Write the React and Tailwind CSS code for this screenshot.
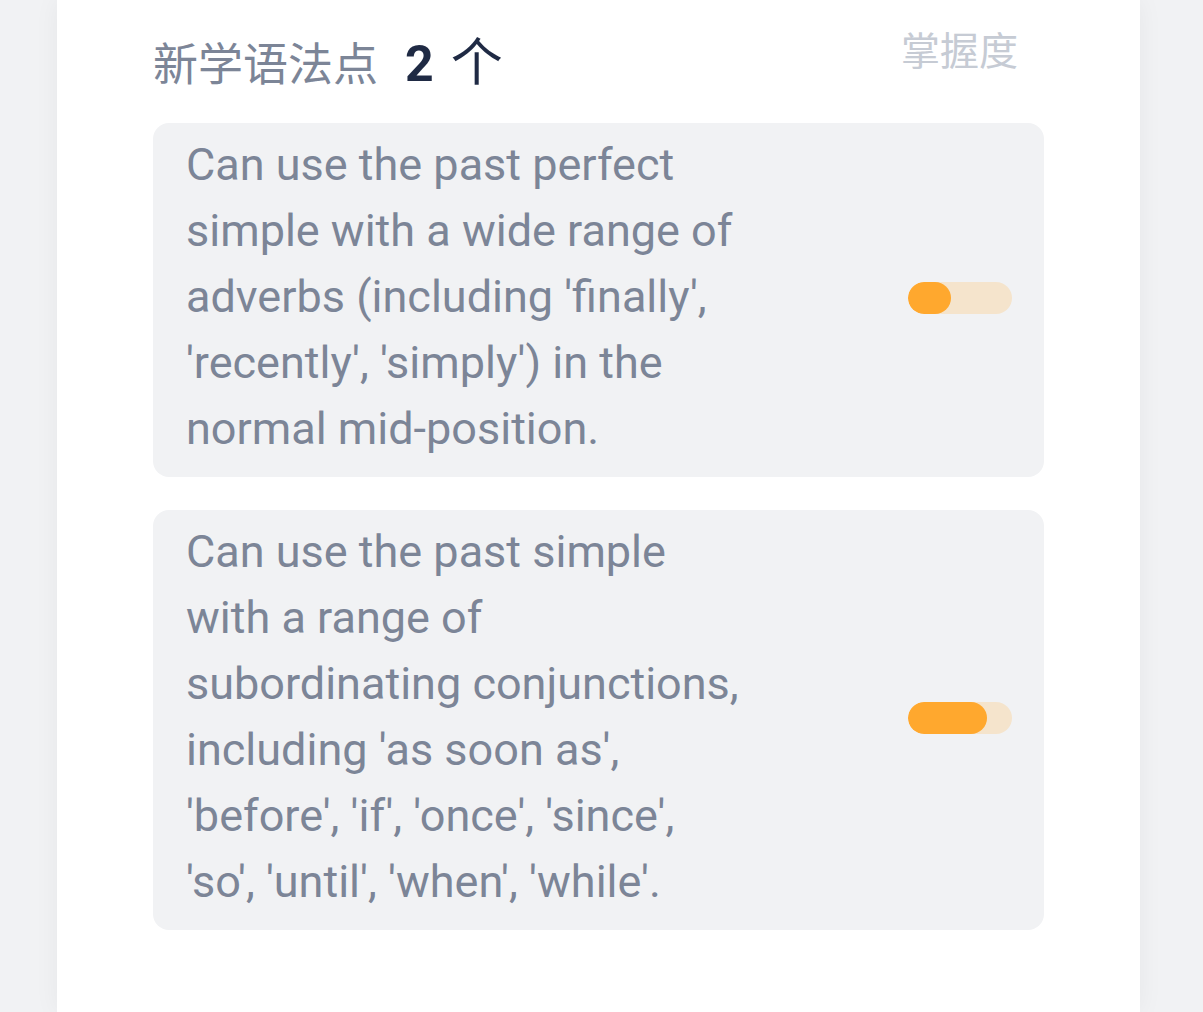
const points = [
  {
    text: "Can use the past perfect simple with a wide range of adverbs (including 'finally', 'recently', 'simply') in the normal mid-position.",
    level: 41,
  },
  {
    text: "Can use the past simple with a range of subordinating conjunctions, including 'as soon as', 'before', 'if', 'once', 'since', 'so', 'until', 'when', 'while'.",
    level: 76,
  },
];

export default function App() {
  return (
    <div className="min-h-screen bg-[#f1f2f4] font-['Roboto','Noto_Sans_CJK_SC',sans-serif]">
      <div className="ml-[57px] w-[1083px] min-h-[1012px] bg-white shadow-[0_0_24px_rgba(0,0,0,0.05)] px-[96px]">
        <div className="flex items-start justify-between pt-[28px] pr-[26px]">
          <div className="flex items-baseline mt-[8px]">
            <span className="text-[45px] leading-[56px] text-[#7c8597]">新学语法点</span>
            <span className="ml-[27px] text-[50px] leading-[56px] font-bold text-[#1f2a44]">2</span>
            <span className="ml-[17px] text-[52px] leading-[56px] text-[#1f2a44]">个</span>
          </div>
          <span className="text-[39px] leading-[48px] text-[#c6cbd4]">掌握度</span>
        </div>

        <div className="mt-[29px] flex flex-col gap-[33px]">
          {points.map((p, i) => (
            <div
              key={i}
              className="bg-[#f1f2f4] rounded-[16px] pl-[33px] pr-[32px] pt-[9px] pb-[15px] flex items-center justify-between"
            >
              <p className="w-[562px] text-[45px] leading-[66px] text-[#7c8597]">{p.text}</p>
              <div className="w-[104px] h-[32px] mt-[2px] rounded-full bg-[#f5e4cc] overflow-hidden">
                <div className="h-full rounded-full bg-[#ffa82e]" style={{ width: p.level + '%' }} />
              </div>
            </div>
          ))}
        </div>
      </div>
    </div>
  );
}
